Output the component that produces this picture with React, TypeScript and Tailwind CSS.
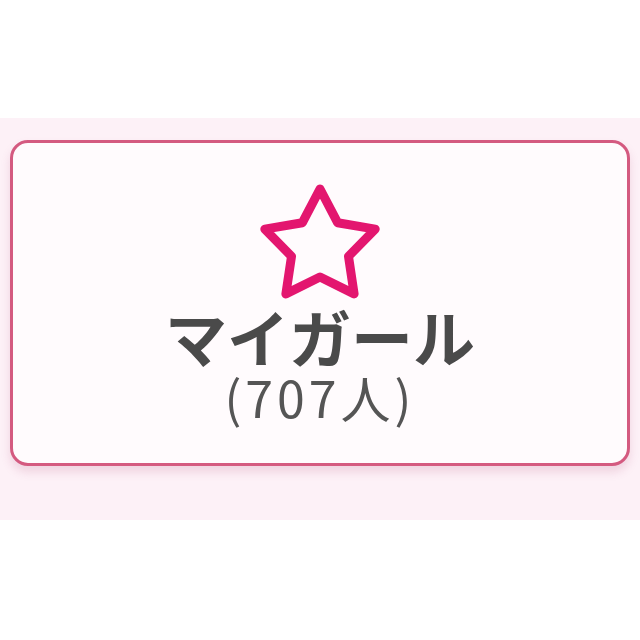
import React from 'react'

const StarIcon = () => (
  <svg width="128" height="120" viewBox="0 0 128 120" fill="none">
    <polygon
      points="64,8 81.6,41.7 119.2,48.1 92.5,75.3 98.1,112.9 64,96 29.9,112.9 35.5,75.3 8.8,48.1 46.4,41.7"
      stroke="#e3166f"
      strokeWidth="9"
      strokeLinejoin="round"
    />
  </svg>
)

const App = () => {
  return (
    <div className="flex h-[640px] w-[640px] flex-col bg-white" style={{ fontFamily: '"Noto Sans CJK JP", "Noto Sans", sans-serif' }}>
      <div className="h-[118px] bg-white" />
      {/* Pink band */}
      <div className="h-[402px] bg-[#fdf1f7] px-[10px] pt-[22px]">
        <div className="flex h-[326px] flex-col items-center rounded-[18px] border-[3px] border-[#d45a80] bg-[#fffbfd] pt-[38px] shadow-[0_6px_10px_rgba(180,80,120,0.18)]">
          <StarIcon />
          <div className="mt-[4px] text-[62px] font-bold leading-[62px] text-[#4a4a4a]">マイガール</div>
          <div className="mt-[4px] text-[50px] leading-[50px] tracking-[4px] text-[#555555]">(707人)</div>
        </div>
      </div>
      <div className="flex-1 bg-white" />
    </div>
  )
}

export default App
